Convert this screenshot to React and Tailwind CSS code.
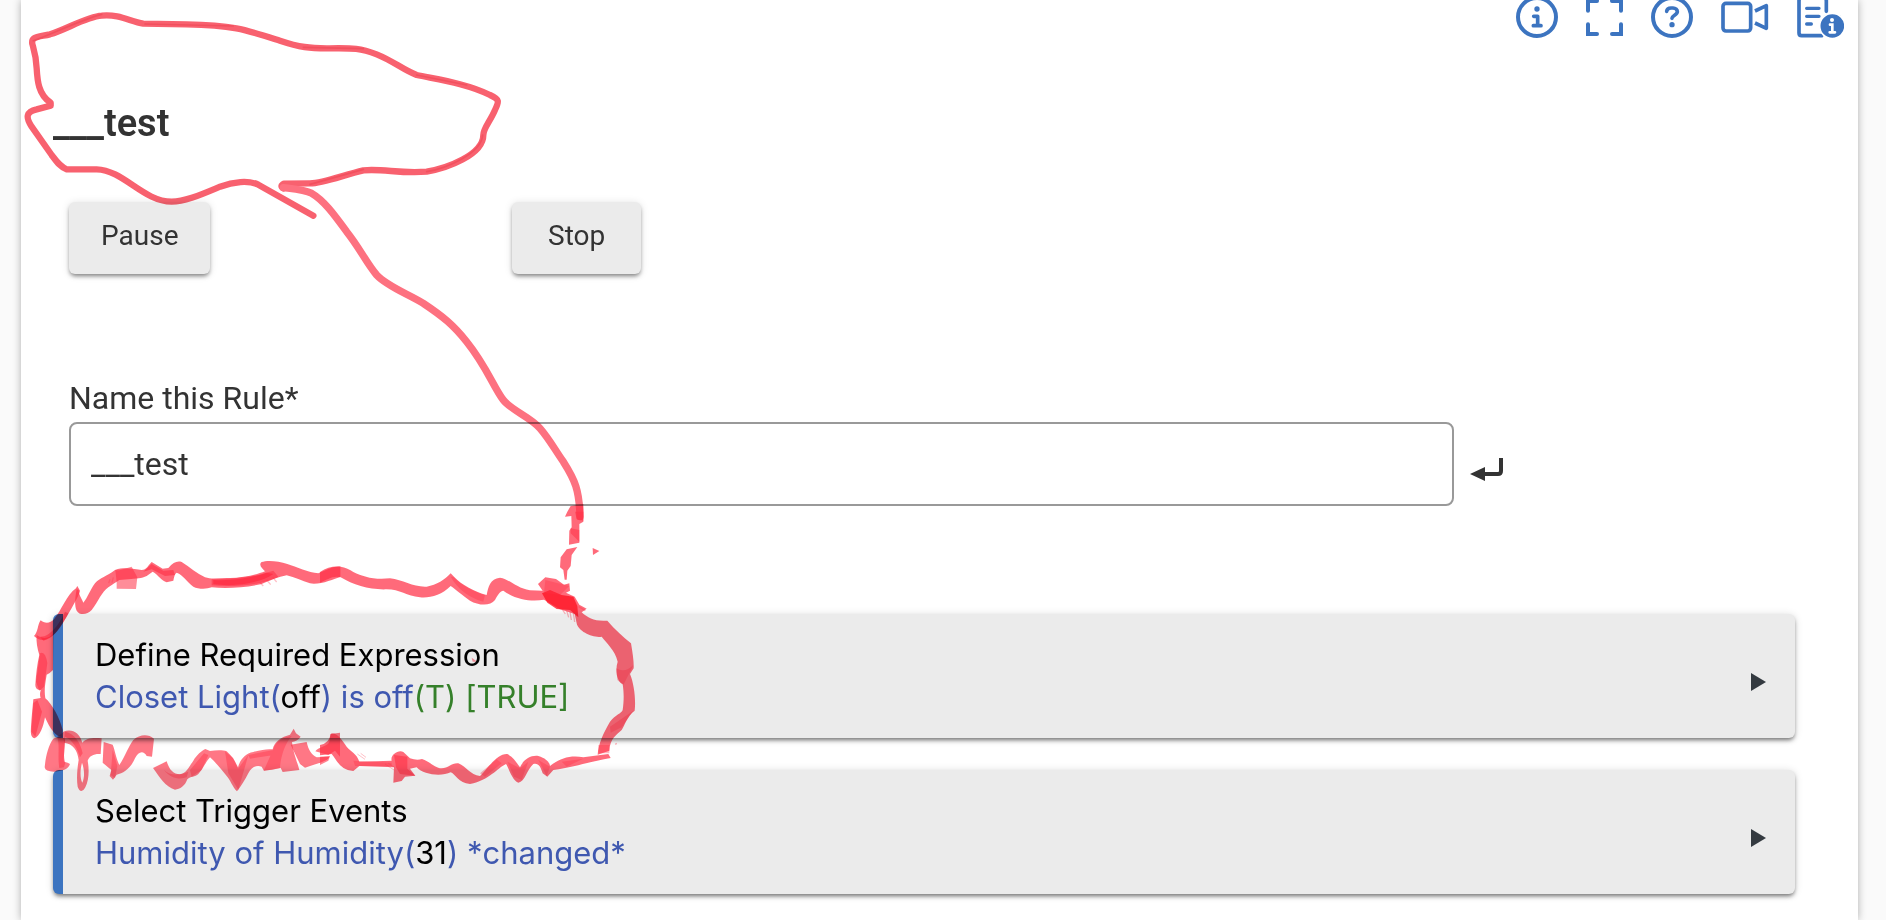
import React, { useState } from 'react';

const InfoIcon = () => (
  <svg width="42" height="42" viewBox="0 0 126 126" fill="none" stroke="currentColor" strokeLinecap="round" strokeLinejoin="round">
    <circle cx="63" cy="63" r="57" strokeWidth="12" />
    <circle cx="63" cy="39" r="8" fill="currentColor" stroke="none" />
    <path d="M53 61H65V88M52 89H75" strokeWidth="11" />
  </svg>
);

const ExpandIcon = () => (
  <svg width="37" height="37" viewBox="0 0 111 111" fill="none" stroke="currentColor" strokeWidth="12" strokeLinecap="round">
    <path d="M6 35V6H33M78 6H105V35M105 76V105H78M33 105H6V76" />
  </svg>
);

const HelpIcon = () => (
  <svg width="42" height="42" viewBox="0 0 126 126" fill="none" stroke="currentColor" strokeLinecap="round" strokeLinejoin="round">
    <circle cx="63" cy="63" r="57" strokeWidth="12" />
    <path d="M47 46C48 38 54 36 60 36H66C74 36 79 41 79 47C79 57 63 58 63 67" strokeWidth="11" />
    <circle cx="63" cy="86" r="8" fill="currentColor" stroke="none" />
  </svg>
);

const VideoIcon = () => (
  <svg width="48" height="32" viewBox="0 0 144 96" fill="none" stroke="currentColor" strokeLinejoin="round">
    <rect x="6" y="7" width="83" height="83" rx="9" strokeWidth="11" />
    <path d="M102 30L136 14V82L102 66" strokeWidth="11" />
  </svg>
);

const LogIcon = () => (
  <svg width="47" height="42" viewBox="0 0 141 126" fill="none" stroke="currentColor" strokeLinecap="round">
    <path d="M88 46V14Q88 6 80 6H14Q6 6 6 14V111Q6 119 14 119H74" strokeWidth="11" />
    <path d="M29 37H66M29 61H66M29 84H43" strokeWidth="10" />
    <circle cx="106" cy="90" r="38" fill="currentColor" stroke="#fff" strokeWidth="5" />
    <circle cx="105" cy="72" r="6" fill="#fff" stroke="none" />
    <path d="M99 86H106V108M98 109H114" stroke="#fff" strokeWidth="8" />
  </svg>
);

const EnterIcon = () => (
  <svg width="34" height="24" viewBox="0 0 34 24" fill="none">
    <path d="M31 0V13Q31 16 28 16H13" stroke="#333" strokeWidth="4" />
    <path d="M0 16L15 9V23Z" fill="#333" />
  </svg>
);

const TOOLS = [
  { label: 'Information', Icon: InfoIcon },
  { label: 'Full screen', Icon: ExpandIcon },
  { label: 'Help', Icon: HelpIcon },
  { label: 'Video', Icon: VideoIcon },
  { label: 'Logs', Icon: LogIcon },
];

const ActionButton = ({ children, className }) => (
  <button
    type="button"
    className={`h-18 rounded-md bg-[#ebebeb] pb-1 text-[28px] text-[#333] shadow-[0_3px_4px_-1px_rgba(0,0,0,0.45),0_1px_8px_rgba(0,0,0,0.12)] ${className}`}
  >
    {children}
  </button>
);

const RulePanel = ({ title, children }) => (
  <button
    type="button"
    className="flex w-full items-center justify-between rounded-md border-l-10 border-[#3c74c0] bg-[#ebebeb] py-5 pr-7 pl-8 text-left font-[Inter,sans-serif] text-[31px] leading-[42px] text-black shadow-[0_3px_4px_-1px_rgba(0,0,0,0.5),0_1px_8px_rgba(0,0,0,0.14)]"
  >
    <span>
      <span className="block">{title}</span>
      <span className="block text-[#3f58b0]">{children}</span>
    </span>
    <svg width="16" height="18" viewBox="0 0 16 18" className="mt-3">
      <path d="M0 0L15 9L0 18Z" fill="#343a40" />
    </svg>
  </button>
);

// Red marker drawing that links the rule name to the required expression
const Marker = () => (
  <svg width="660" height="800" viewBox="0 0 1980 2400" className="pointer-events-none absolute top-0 left-0 mix-blend-multiply" aria-hidden="true">
    <g fill="none" strokeLinecap="round" strokeLinejoin="round">
      <path
        stroke="#f8616f"
        strokeWidth="19"
        d="M940 647L775 554C745 540 700 545 660 560C600 585 555 605 515 605C430 605 370 510 290 508L200 508C180 500 170 485 155 465L95 380C75 350 80 335 110 328L152 317L152 308C115 285 112 240 110 205C108 165 102 150 97 132C93 110 110 112 150 103C200 88 260 50 305 47C360 42 390 65 430 71L560 73C700 75 740 90 840 122C900 142 930 145 980 145C1060 144 1080 143 1130 163C1180 183 1210 210 1250 225C1310 238 1400 250 1470 285C1500 298 1497 305 1485 330C1470 365 1450 385 1450 405C1450 465 1340 505 1280 515C1200 522 1150 505 1090 511C1030 525 970 550 930 550L852 551Q838 558 850 565"
      />
      <path
        stroke="#fd7180"
        strokeWidth="22"
        d="M850 563C890 568 915 570 935 580C970 600 1000 640 1040 695C1080 745 1100 790 1130 825C1160 858 1220 880 1270 910C1330 950 1360 975 1400 1025C1460 1100 1480 1160 1510 1200C1535 1232 1590 1250 1620 1285C1650 1320 1665 1350 1690 1385C1725 1440 1738 1470 1740 1550"
      />
      <path stroke="#ee4454" strokeWidth="5" opacity="0.6" d="M100 122C150 105 240 60 305 43M435 72L700 78M910 142L1090 146M1250 225L1400 255M1448 405C1445 460 1340 505 1280 515M1090 508L930 553" />
    </g>

    {/* left side and top edge */}
    <g transform="translate(0 1620)" fill="#ff3046" fillOpacity="0.72">
      <path d="M122 241C132 250 150 252 162 238C185 210 200 165 228 145L232 138L240 152C238 165 220 195 200 230C175 270 165 285 145 295C130 305 115 300 102 288C115 275 112 255 122 241Z" />
      <path d="M230 148C226 170 222 195 230 212C240 228 262 224 275 210C295 185 305 155 325 142C340 132 350 125 358 120L385 118C410 115 425 116 440 108L458 95C475 105 485 122 500 127L520 122C522 110 525 100 530 98C550 105 560 125 580 140C595 148 620 148 635 142C680 146 740 143 785 132C810 122 835 110 860 106C885 112 905 122 930 130C960 135 1000 118 1022 110V80C1000 78 980 90 955 100C925 98 890 80 862 72C835 62 800 60 785 66C775 74 785 84 795 94C770 104 730 114 690 114C665 112 640 120 615 112C590 100 570 82 545 66C530 62 520 68 505 84L488 86L455 66C445 75 440 90 425 90C405 88 375 80 345 90C320 110 300 112 285 130C270 150 262 175 250 188C245 175 236 165 236 150Z" />
      <path d="M110 285C130 300 150 295 160 280L159 390Q150 400 140 404C136 430 132 445 136 475C155 490 180 535 188 570V592C165 590 150 565 135 532C130 560 120 590 103 595C92 590 92 580 93 560C95 530 98 500 100 478L122 474C118 460 122 455 122 450Q106 450 106 435C108 400 112 370 118 345C112 325 108 305 110 285Z" />
      <path fillOpacity="0.55" d="M120 340Q136 332 142 370L132 440L118 452L108 425ZM350 93L395 80L412 112L408 147L350 146ZM635 118C680 118 750 112 785 102L820 92L835 110C790 135 700 142 635 136ZM100 490L112 480L126 515L106 590L94 575ZM346 90L368 92L352 148Z" />
      <path fill="#ff1830" fillOpacity="0.45" d="M640 120C700 124 760 112 800 98L820 102C780 130 700 142 640 132ZM120 290C150 292 180 250 195 215L205 220C185 260 160 298 130 302ZM430 95L455 72L490 92L520 90L525 105L495 108L455 88Z" />
      <path stroke="#ff3046" strokeOpacity="0.3" strokeWidth="4" fill="none" d="M780 128L790 138M800 120L812 134M818 112L830 126M330 118L326 130M340 112L336 128" />
    </g>

    {/* bottom edge, left part */}
    <g transform="translate(0 1620)" fill="#ff3046" fillOpacity="0.66">
      <path d="M160 596C172 588 195 590 195 600C195 630 190 650 192 665Q205 668 210 672C205 688 190 692 165 695Q136 696 134 682C137 650 145 615 160 596Z" />
      <path d="M190 575C215 566 238 576 247 608C258 594 280 592 305 595L302 642C285 640 268 646 263 662C268 690 267 720 256 742C248 758 238 755 233 740C229 715 232 685 236 660C232 630 220 612 192 608ZM246 668C240 690 240 715 247 728C254 712 254 690 246 668Z" fillRule="evenodd" />
      <path fillOpacity="0.5" d="M172 590L192 575C198 605 186 640 196 668L192 682L178 684C172 650 180 620 172 590ZM195 575C225 580 242 610 248 640L240 652C232 625 218 600 195 590Z" />
      <path d="M311 606L338 614C345 630 348 655 358 675C375 650 385 620 400 600C420 582 445 582 462 596L456 650L440 648C430 630 415 635 405 655C392 685 370 700 350 704L339 719L329 708L334 690L308 668Z" />
      <path d="M459 684L500 664C508 690 520 702 540 703C560 700 568 678 580 662C590 645 605 632 616 627L630 633C650 630 670 630 680 634C698 650 706 665 714 682C720 660 735 640 760 636C785 630 800 626 818 628C822 605 845 590 870 584L881 566L888 580L902 590C895 600 885 604 876 606C880 640 890 660 898 690L848 696L842 684L792 693L785 680C770 675 755 680 745 700C735 720 722 740 711 754C698 742 690 718 680 708C665 690 650 670 630 652C618 665 608 688 595 702C585 712 572 708 562 718C555 738 540 748 525 749C495 740 480 712 459 684Z" />
      <path d="M872 614L920 606C925 630 935 645 950 652L988 650C985 662 960 668 915 683L900 672ZM946 634C955 620 985 618 988 605L992 582L1020 578V650L1005 632L985 645Z" />
      <path fillOpacity="0.4" d="M338 630L352 678L345 715L332 705ZM675 634L700 655L714 686L745 645L715 750L685 700ZM820 628C825 605 850 592 875 588C855 610 842 650 840 684L815 690L792 690ZM570 690L612 640L625 645L605 690L575 710ZM492 690C510 708 540 706 565 695L560 712C540 720 510 715 492 690ZM745 645L820 630L822 645L750 656Z" />
    </g>

    {/* right side */}
    <g transform="translate(960 1440)" fill="#ff3046" fillOpacity="0.72">
      <path d="M62 260C75 262 90 268 100 276C130 290 160 300 210 295C250 300 280 322 320 320C350 316 375 298 392 280L402 290C425 315 465 335 500 345C505 320 510 296 540 293C570 298 590 325 630 331L668 332L654 312L676 292L708 297L732 314L748 310L750 332L738 338L764 350L778 374L800 386L785 397C805 415 825 425 862 422C885 450 910 470 933 490C938 520 942 545 941 565L930 582C942 610 948 660 944 692C920 710 915 735 905 750C890 765 870 775 868 812L833 824C835 790 850 760 870 725C885 705 905 700 908 690C912 660 912 640 908 612C890 605 885 570 893 545C885 510 860 490 845 470C820 475 775 455 770 430L764 402L720 388L672 359C640 365 590 362 550 332C540 332 530 350 525 360C510 380 475 376 450 362C425 345 410 330 392 318C365 345 330 355 300 352C260 348 240 328 200 328C150 330 100 315 62 292Z" />
      <path d="M0 276C20 262 40 258 62 260V292C40 285 20 300 0 308Z" />
      <path fill="#ff1020" fillOpacity="0.75" d="M666 340L690 330L725 345L760 350L772 378L775 412L750 390L710 387L682 368Z" />
      <path fillOpacity="0.35" d="M889 565Q915 580 940 555L928 580L910 615L892 600ZM870 740L940 692L905 742L872 758ZM676 300L748 318L720 345L672 338ZM835 795H868V820H836ZM392 290L400 290C420 312 460 335 495 345L490 365C450 355 410 325 392 290Z" />
      <path stroke="#ff3046" strokeOpacity="0.35" strokeWidth="4" fill="none" d="M728 390L736 402M740 392L746 412M750 395L754 420M760 398L764 426M776 380L796 392" />
      <path d="M752 78L790 72V125L778 132V188L747 194L748 152L755 142L754 108L735 110L742 95Z" />
      <path fillOpacity="0.5" d="M765 95H790V122L770 118ZM752 145L778 150V185L752 160Z" />
      <path d="M740 208L772 201L755 225L752 258L742 272L740 299H734L730 270L720 262L722 232Z" />
      <path d="M818 204L838 213L819 225Z" />
      <path fillOpacity="0.5" d="M455 533L472 545H458ZM885 791L891 788L888 796Z" />
    </g>

    {/* bottom edge, right part */}
    <g transform="translate(960 1440)" fill="#ff3046" fillOpacity="0.72">
      <path d="M0 795Q28 790 32 762C50 755 65 780 80 800C92 815 110 820 118 845L215 842C210 825 235 808 250 816L270 835Q290 842 306 837C330 845 345 865 365 865C385 865 395 848 415 850C440 860 450 885 480 888C500 870 530 820 562 822C585 835 590 850 600 862C610 840 630 825 655 828C680 835 690 850 690 858C720 835 750 825 790 832L865 822L872 834C820 842 770 860 700 870L682 890L668 880C662 860 655 848 640 852C620 870 615 905 595 908C575 900 565 860 558 852C530 865 510 900 450 912C415 910 405 880 392 877C365 890 310 885 290 862L270 866L286 887L255 890L245 903L220 908L222 862L118 858L100 873C60 870 50 840 35 822L0 826Z" />
      <path fillOpacity="0.6" d="M222 825L262 830L262 866L286 887L240 882L228 862ZM0 830L30 828L25 842L0 855Z" />
      <path fillOpacity="0.35" d="M562 845L600 865L625 845L605 900L582 890ZM655 840L690 860L680 888ZM480 880L530 838L545 850L495 890ZM100 842L215 848L215 858L105 858ZM725 845L790 836L740 860Z" />
      <path stroke="#ff3046" strokeOpacity="0.3" strokeWidth="3" fill="none" d="M112 822L135 838M122 820L138 832M195 852L222 870M205 850L224 862" />
    </g>
  </svg>
);

const App = () => {
  const [name, setName] = useState('___test');

  return (
    <div className="relative min-h-screen overflow-hidden bg-[#fafafa] pr-7 pl-[21px] font-[Roboto,sans-serif] text-[#333]">
      <main className="flow-root min-h-screen bg-white pb-6 shadow-[0_0_8px_rgba(0,0,0,0.3)]">
        <nav className="-mt-1 flex h-[42px] items-center justify-end gap-7 pr-[14px] text-[#3c74c0]">
          {TOOLS.map(({ label, Icon }) => (
            <button key={label} type="button" aria-label={label}>
              <Icon />
            </button>
          ))}
        </nav>

        <div className="pr-[63px] pl-8">
          <h1 className="mt-[65px] text-[38px] leading-10 font-semibold">{name}</h1>

          <div className="mt-[59px] grid grid-cols-4 gap-[62px] px-4">
            <div>
              <ActionButton className="px-8">Pause</ActionButton>
            </div>
            <div>
              <ActionButton className="px-9">Stop</ActionButton>
            </div>
          </div>

          <div className="mt-26 px-4">
            <label htmlFor="rule-name" className="mb-1 block text-[32px] leading-10">
              Name this Rule*
            </label>
            <div className="flex items-center gap-4">
              <input
                id="rule-name"
                type="text"
                value={name}
                onChange={(e) => setName(e.target.value)}
                className="h-21 w-[81%] rounded-lg border-2 border-[#999] bg-white px-5 text-[32px]"
              />
              <button type="button" aria-label="Save name" className="mt-3">
                <EnterIcon />
              </button>
            </div>
          </div>

          <div className="mt-27 flex flex-col gap-8">
            <RulePanel title="Define Required Expression">
              Closet Light(<span className="text-black">off</span>) is off
              <span className="text-[#35802a]">(T) [TRUE]</span>
            </RulePanel>
            <RulePanel title="Select Trigger Events">
              Humidity of Humidity(<span className="text-black">31</span>) *changed*
            </RulePanel>
          </div>
        </div>
      </main>

      <Marker />
    </div>
  );
};

export default App;
